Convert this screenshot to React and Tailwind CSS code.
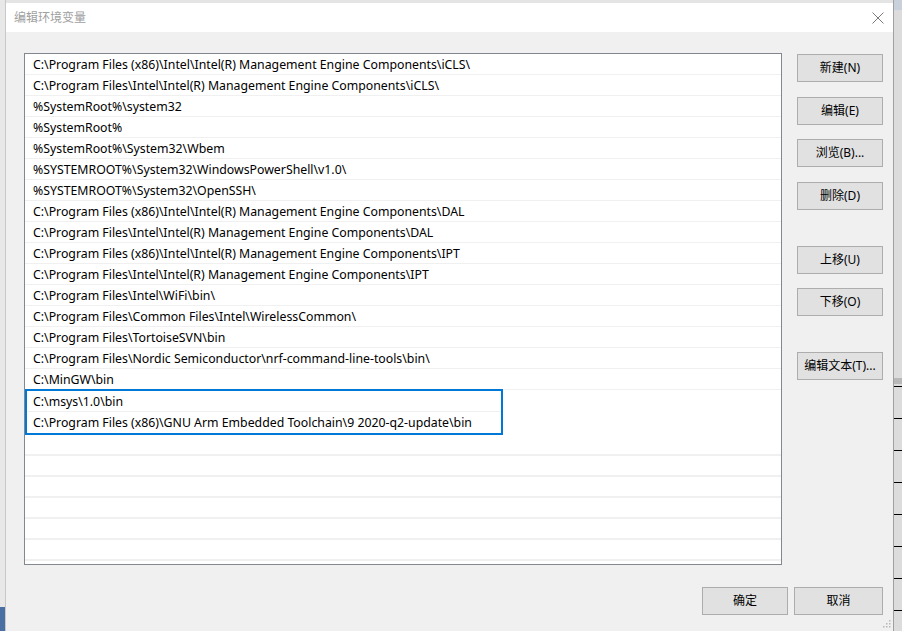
import React from "react";

const rows = [
  "C:\\Program Files (x86)\\Intel\\Intel(R) Management Engine Components\\iCLS\\",
  "C:\\Program Files\\Intel\\Intel(R) Management Engine Components\\iCLS\\",
  "%SystemRoot%\\system32",
  "%SystemRoot%",
  "%SystemRoot%\\System32\\Wbem",
  "%SYSTEMROOT%\\System32\\WindowsPowerShell\\v1.0\\",
  "%SYSTEMROOT%\\System32\\OpenSSH\\",
  "C:\\Program Files (x86)\\Intel\\Intel(R) Management Engine Components\\DAL",
  "C:\\Program Files\\Intel\\Intel(R) Management Engine Components\\DAL",
  "C:\\Program Files (x86)\\Intel\\Intel(R) Management Engine Components\\IPT",
  "C:\\Program Files\\Intel\\Intel(R) Management Engine Components\\IPT",
  "C:\\Program Files\\Intel\\WiFi\\bin\\",
  "C:\\Program Files\\Common Files\\Intel\\WirelessCommon\\",
  "C:\\Program Files\\TortoiseSVN\\bin",
  "C:\\Program Files\\Nordic Semiconductor\\nrf-command-line-tools\\bin\\",
  "C:\\MinGW\\bin",
];
const selected = [
  "C:\\msys\\1.0\\bin",
  "C:\\Program Files (x86)\\GNU Arm Embedded Toolchain\\9 2020-q2-update\\bin",
];

function Row({ text }) {
  return (
    <div className="h-[21px] border-b border-[#f0f0f0] pl-[8px] leading-[22px] whitespace-nowrap">
      {text}
    </div>
  );
}

function Btn({ children, className = "" }) {
  return (
    <div
      className={
        "h-[28px] w-[86px] border border-[#adadad] bg-[#e1e1e1] flex items-center justify-center text-[12px] text-black " +
        className
      }
    >
      {children}
    </div>
  );
}

export default function App() {
  const font = { fontFamily: '"Noto Sans", "Noto Sans CJK SC", sans-serif' };
  return (
    <div
      className="w-[902px] h-[631px] overflow-hidden bg-[#e4e4e4] flex"
      style={font}
    >
      <div className="w-[6px] flex flex-col">
        <div className="flex-1 bg-[#e8e8e8] border-r border-[#c8c8c8]"></div>
        <div className="h-[24px] bg-[#4a6fa5] border-r border-[#c8c8c8]"></div>
      </div>
      <div className="w-[887px] flex flex-col mt-[3px] relative">
        <div className="h-[29px] bg-white flex items-center justify-between pl-[8px] pr-[7px]">
          <span className="text-[12px] text-[#a0a0a0]">编辑环境变量</span>
          <svg width="14" height="14" viewBox="0 0 14 14" className="mr-[1px]">
            <path d="M1.5 1.5 L12.5 12.5 M12.5 1.5 L1.5 12.5" stroke="#7a7a7a" strokeWidth="1" />
          </svg>
        </div>
        <div className="flex-1 bg-[#f0f0f0] flex flex-col">
          <div className="flex pt-[21px] pl-[18px]">
            <div className="w-[758px] h-[512px] border border-[#828790] bg-white overflow-hidden text-[12.3px] text-black">
              {rows.map((r, i) => (
                <Row key={i} text={r} />
              ))}
              <div className="w-[478px] border-2 border-[#0078d7] -mt-[1px]">
                <div className="h-[21px] border-b border-[#f0f0f0] pl-[6px] leading-[22px] whitespace-nowrap">
                  {selected[0]}
                </div>
                <div className="h-[21px] pl-[6px] leading-[21px] whitespace-nowrap">
                  {selected[1]}
                </div>
              </div>
              {Array.from({ length: 7 }).map((_, i) => (
                <div key={i} className="h-[21px] border-b-2 border-[#f0f0f0]"></div>
              ))}
            </div>
            <div className="flex flex-col ml-[15px] pt-[1px]">
              <Btn>新建(N)</Btn>
              <Btn className="mt-[15px]">编辑(E)</Btn>
              <Btn className="mt-[14px]">浏览(B)...</Btn>
              <Btn className="mt-[15px]">删除(D)</Btn>
              <Btn className="mt-[36px]">上移(U)</Btn>
              <Btn className="mt-[14px]">下移(O)</Btn>
              <Btn className="mt-[36px]">编辑文本(T)...</Btn>
            </div>
          </div>
          <div className="flex justify-end pr-[10px] mt-[22px] gap-[6px]">
            <Btn>确定</Btn>
            <Btn className="w-[89px]">取消</Btn>
          </div>
          <div className="flex justify-end pr-[2px] mt-[5px]">
            <svg width="8" height="8" viewBox="0 0 8 8">
              <rect x="6" y="0" width="1.5" height="1.5" fill="#b8b8b8" />
              <rect x="3" y="3" width="1.5" height="1.5" fill="#b8b8b8" />
              <rect x="6" y="3" width="1.5" height="1.5" fill="#b8b8b8" />
              <rect x="0" y="6" width="1.5" height="1.5" fill="#b8b8b8" />
              <rect x="3" y="6" width="1.5" height="1.5" fill="#b8b8b8" />
              <rect x="6" y="6" width="1.5" height="1.5" fill="#b8b8b8" />
            </svg>
          </div>
        </div>
      </div>
      <div className="w-[9px] flex flex-col bg-[#dcdcdc] border-l border-[#a0a0a0]">
        <div className="h-[10px] bg-[#c8d0dc]"></div>
        <div className="h-[368px]"></div>
        <div className="h-[6px] bg-[#b8b8b8]"></div>
        <div className="h-[3px] border-b border-black"></div>
        <div className="h-[32px] border-b border-black"></div>
        <div className="h-[32px] border-b border-black"></div>
        <div className="h-[32px] border-b border-black"></div>
        <div className="h-[32px] border-b border-black"></div>
        <div className="h-[32px] border-b border-black"></div>
        <div className="h-[32px] border-b border-black"></div>
        <div className="h-[32px] border-b border-black"></div>
      </div>
    </div>
  );
}
